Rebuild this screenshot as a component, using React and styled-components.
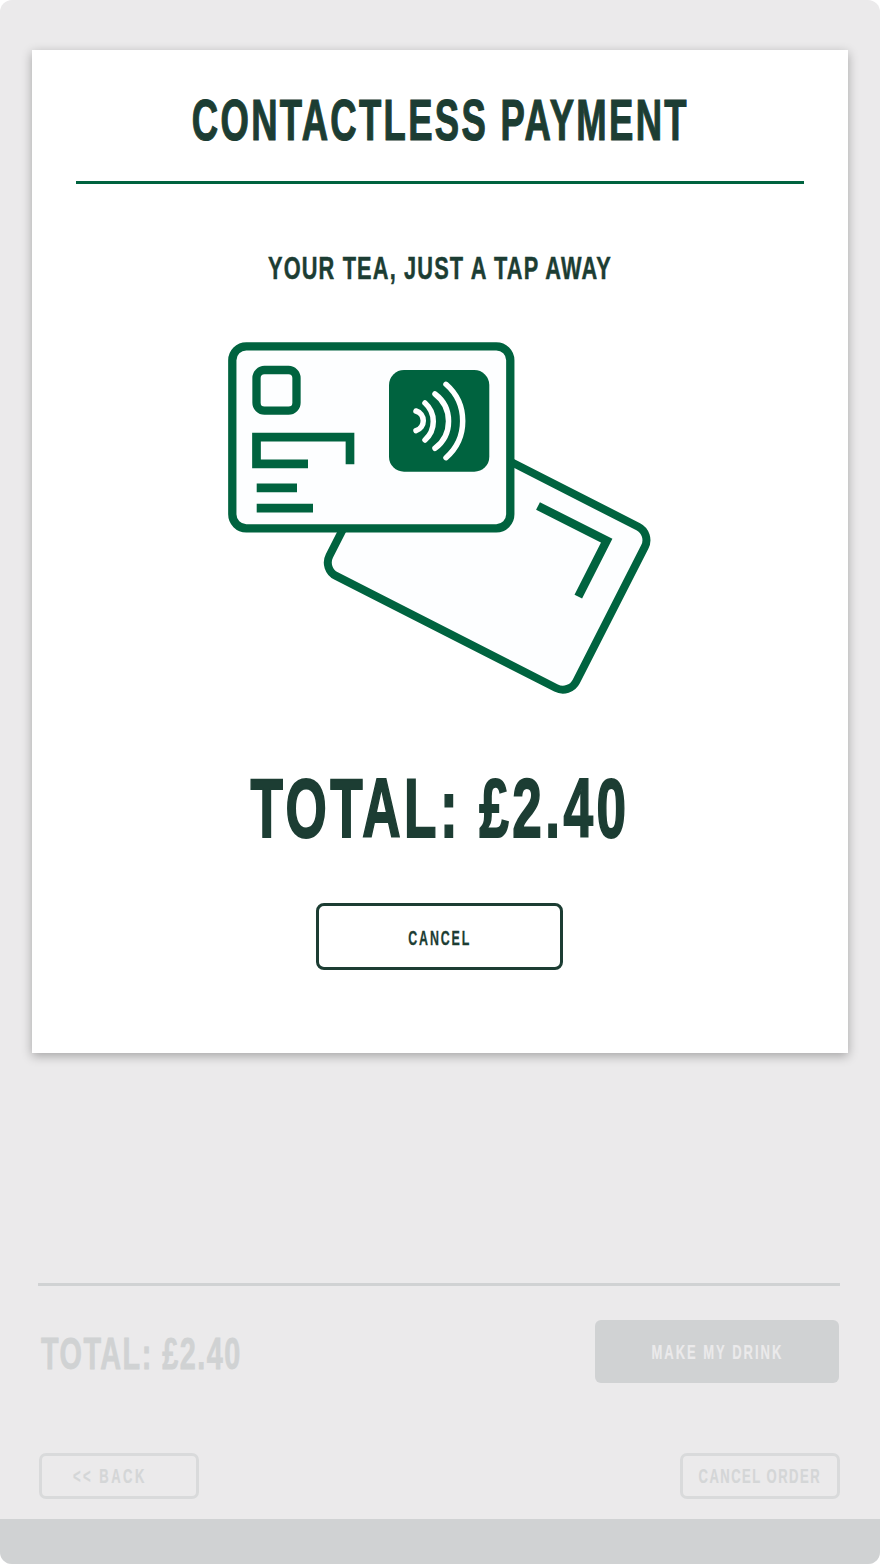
import React from 'react'
import styled, { createGlobalStyle } from 'styled-components'

const Global = createGlobalStyle`
  html, body { margin: 0; padding: 0; background: #fff; }
  body { font-family: "Liberation Sans", Arial, sans-serif; }
`

// no condensed font is installed, so the labels are squeezed by hand
const Label = styled.span`
  display: block;
  flex-shrink: 0;
  font-family: "Liberation Sans", Arial, sans-serif;
  font-weight: 700;
  white-space: nowrap;
  font-size: ${p => p.$size}px;
  letter-spacing: ${p => p.$track}px;
  -webkit-text-stroke: ${p => p.$bold || 0}px currentColor;
  transform: scaleX(${p => p.$sx || 0.62});
  transform-origin: ${p => p.$origin || 'center'};
`

const Screen = styled.div`
  position: relative;
  width: 880px;
  height: 1564px;
  border-radius: 12px;
  overflow: hidden;
  background: #ebeaeb;
  display: flex;
  flex-direction: column;
  justify-content: flex-end;
`
const Checkout = styled.div`
  padding: 0 41px 0 38px;
`
const Rule = styled.div`
  height: 3px;
  background: #d0d2d3;
  margin-right: -1px;
`
const TotalRow = styled.div`
  display: flex;
  justify-content: space-between;
  align-items: center;
  margin-top: 34px;
  padding-left: 3px;
`
const GhostTotal = styled.div`
  display: flex;
  width: 200px;
  line-height: 50px;
  padding-top: 4px;
  color: #d0d2d3;
`
const MakeButton = styled.div`
  width: 244px;
  height: 63px;
  border-radius: 6px;
  background: #d0d2d3;
  color: #ebeaeb;
  display: flex;
  align-items: center;
  justify-content: center;
  overflow: hidden;
`
const NavRow = styled.div`
  display: flex;
  justify-content: space-between;
  margin: 70px -1px 20px 0;
  padding-left: 1px;
`
const NavButton = styled.div`
  box-sizing: border-box;
  width: 160px;
  height: 46px;
  border: 3px solid #d9dadb;
  border-radius: 7px;
  color: #d4d6d7;
  display: flex;
  align-items: center;
  justify-content: ${p => (p.$start ? 'flex-start' : 'center')};
  padding-left: ${p => (p.$start ? '31px' : '0')};
  overflow: hidden;
`
const FooterBar = styled.div`
  height: 45px;
  background: #d0d2d3;
`
const Modal = styled.div`
  position: absolute;
  top: 50px;
  left: 32px;
  box-sizing: border-box;
  width: 816px;
  height: 1003px;
  background: #fff;
  box-shadow: 0 3px 10px rgba(0, 0, 0, 0.3);
  display: flex;
  flex-direction: column;
  align-items: center;
  padding: 0 44px;
  color: #1c3d33;
`
const Title = styled.h1`
  display: flex;
  margin: 41px 0 0;
  font-size: inherit;
  line-height: 58px;
`
const GreenRule = styled.div`
  align-self: stretch;
  height: 2.5px;
  background: #00633f;
  margin-top: 32px;
`
const Subtitle = styled.h2`
  display: flex;
  margin: 64px 0 0;
  font-size: inherit;
  line-height: 40px;
`
const Illustration = styled.svg`
  display: block;
  margin-top: 42px;
`
const Total = styled.div`
  display: flex;
  margin-top: 53px;
  line-height: 92px;
`
const CancelButton = styled.div`
  box-sizing: border-box;
  width: 247px;
  height: 67px;
  margin-top: 48px;
  margin-left: -1px;
  padding-top: 4px;
  border: 3px solid #1c3d33;
  border-radius: 8px;
  display: flex;
  align-items: center;
  justify-content: center;
  overflow: hidden;
`

const green = '#00633f'

function Cards() {
  return (
    <Illustration width="460" height="380" viewBox="210 330 460 380" fill="none">
      <rect
        x="404.8"
        y="407.8"
        width="277"
        height="181"
        rx="15"
        fill="#fdfeff"
        stroke={green}
        strokeWidth="8"
        transform="rotate(27 404.8 407.8)"
      />
      <path d="M538 506L606.7 540.7L578.3 596.7" stroke={green} strokeWidth="8.5" />
      <rect x="232.3" y="346.3" width="278" height="182" rx="14" fill="#fdfeff" stroke={green} strokeWidth="8.3" />
      <rect x="256.5" y="370" width="40" height="40.7" rx="8" stroke={green} strokeWidth="8.3" />
      <path d="M308 463.8H256.5V437.2H350V464.3" stroke={green} strokeWidth="8.7" />
      <path d="M256.7 487.8H297M256.7 508.2H313" stroke={green} strokeWidth="8.7" />
      <rect x="389" y="370" width="100.3" height="101.7" rx="15" fill={green} />
      <g stroke="#fff" strokeWidth="5.5" strokeLinecap="round">
        <path d="M416 411A10.3 10.3 0 0 1 416 430.7" />
        <path d="M425 403A24.8 24.8 0 0 1 425 440" />
        <path d="M435 394A34 34 0 0 1 435 448.3" />
        <path d="M446 384.3A48.7 48.7 0 0 1 446 457.7" />
      </g>
    </Illustration>
  )
}

export default function App() {
  return (
    <>
      <Global />
      <Screen>
        <Checkout>
          <Rule />
          <TotalRow>
            <GhostTotal>
              <Label $size={45} $track={2.3} $sx={0.64} $bold={0.8} $origin="left">TOTAL: £2.40</Label>
            </GhostTotal>
            <MakeButton>
              <Label $size={21} $track={3.2} $bold={0.2}>MAKE MY DRINK</Label>
            </MakeButton>
          </TotalRow>
          <NavRow>
            <NavButton $start>
              <Label $size={21} $track={4} $bold={0.2} $origin="left">&lt;&lt; BACK</Label>
            </NavButton>
            <NavButton>
              <Label $size={21} $track={2.4} $bold={0.2}>CANCEL ORDER</Label>
            </NavButton>
          </NavRow>
        </Checkout>
        <FooterBar />
        <Modal>
          <Title>
            <Label $size={57} $track={3.6} $sx={0.64} $bold={1.2}>CONTACTLESS PAYMENT</Label>
          </Title>
          <GreenRule />
          <Subtitle>
            <Label $size={32} $track={1.7} $sx={0.68} $bold={0.5}>YOUR TEA, JUST A TAP AWAY</Label>
          </Subtitle>
          <Cards />
          <Total>
            <Label $size={83} $track={5.4} $sx={0.64} $bold={2}>TOTAL: £2.40</Label>
          </Total>
          <CancelButton>
            <Label $size={20} $track={3} $bold={0.3}>CANCEL</Label>
          </CancelButton>
        </Modal>
      </Screen>
    </>
  )
}
